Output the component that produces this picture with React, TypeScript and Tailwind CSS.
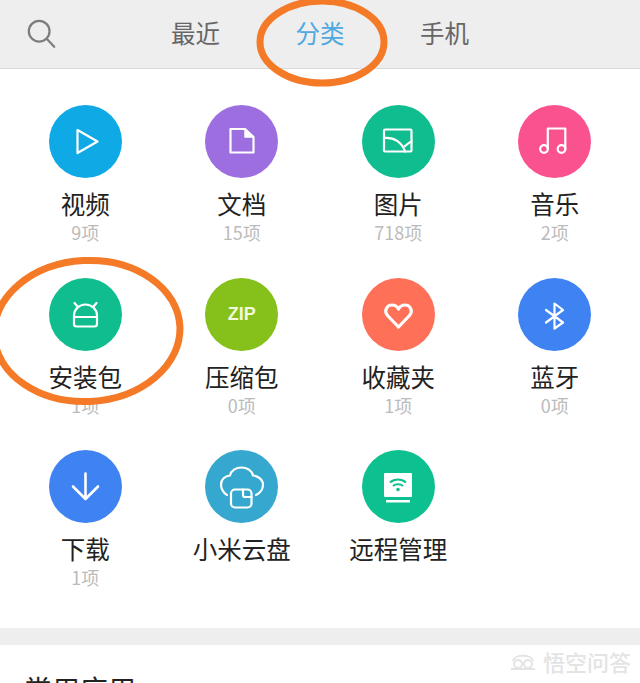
import React from "react";

const sw = { fill: "none", stroke: "white", strokeWidth: 2.2, strokeLinejoin: "round" as const, strokeLinecap: "round" as const };

const icons: Record<string, React.ReactNode> = {
  play: <path d="M28.5 25 L48.5 36.5 L28.5 48 Z" {...sw} />,
  doc: (
    <>
      <path d="M25.5 24 H40 L48.5 32 V47.5 H25.5 Z" {...sw} />
      <path d="M40 24 V32 H48.5 Z" fill="white" stroke="white" strokeWidth={1.5} strokeLinejoin="round" />
    </>
  ),
  image: (
    <>
      <rect x="22" y="24.5" width="27.5" height="22" rx="1" {...sw} />
      <path d="M22 33 C32 32 40 37 43 46.5 M43 41 C45 39.5 47 37.5 49.5 36.5" {...sw} />
    </>
  ),
  music: (
    <>
      <circle cx="26" cy="44" r="3.8" {...sw} />
      <circle cx="43.5" cy="44" r="3.8" {...sw} />
      <path d="M29.8 44 V23.5 H47.3 V44" {...sw} />
    </>
  ),
  android: (
    <path d="M25 37.5 a11.500 11 0 0 1 23 0 V46 a2.5 2.5 0 0 1 -2.5 2.500 H27.500 a2.5 2.5 0 0 1 -2.5 -2.500 Z M25 39 H48 M28.500 28.500 L25.500 25 M44.500 28.500 L47.500 25" {...sw} />
  ),
  zip: null,
  heart: <path d="M36.5 49 L25.5 37.5 C21.5 32.5 25 27 30 27 C33 27 35.500 29 36.500 31 C37.500 29 40 27 43 27 C48 27 51.500 32.500 47.500 37.500 Z" fill="none" stroke="white" strokeWidth={3.2} strokeLinejoin="round" />,
  bluetooth: <path d="M28 32 L45 44.500 L36.500 50.500 V25.500 L45 32 L28 44.500" {...sw} />,
  download: <path d="M36.500 23.500 V48.500 M24 36.500 L36.500 49 L49 36.500" {...sw} strokeWidth={2.6} />,
  cloud: (
    <>
      <path d="M22 45 C18 43 16 38 16 34.500 C16 29.500 20 26 25 25.500 C26 20.500 31 17.500 36.500 17.500 C42 17.500 47 20.500 48 25.500 C53 26 58 29.500 58 34.500 C58 38 56 43 51 45" {...sw} />
      <rect x="26" y="39.500" width="20.500" height="18" rx="4" {...sw} />
      <path d="M38 39.500 V45 a2 2 0 0 0 2 2 H46.500" {...sw} />
    </>
  ),
  remote: (
    <>
      <rect x="22" y="23" width="28" height="24" rx="1" fill="white" />
      <rect x="24" y="50" width="24" height="2.500" fill="white" />
      <path d="M28 32.500 C32.500 28.500 39.500 28.500 44 32.500 M31 36 C33.500 33.800 38.500 33.800 41 36" fill="none" stroke="#0cc08f" strokeWidth={2} />
      <circle cx="36" cy="39.500" r="1.800" fill="#0cc08f" />
    </>
  ),
};

const items = [
  { name: "视频", count: "9项", bg: "bg-[#0fa9e6]", icon: "play" },
  { name: "文档", count: "15项", bg: "bg-[#9d6ee0]", icon: "doc" },
  { name: "图片", count: "718项", bg: "bg-[#10bd8f]", icon: "image" },
  { name: "音乐", count: "2项", bg: "bg-[#f9528f]", icon: "music" },
  { name: "安装包", count: "1项", bg: "bg-[#10bd8f]", icon: "android" },
  { name: "压缩包", count: "0项", bg: "bg-[#86c01a]", icon: "zip" },
  { name: "收藏夹", count: "1项", bg: "bg-[#ff7059]", icon: "heart" },
  { name: "蓝牙", count: "0项", bg: "bg-[#3f83f3]", icon: "bluetooth" },
  { name: "下载", count: "1项", bg: "bg-[#3f83f3]", icon: "download" },
  { name: "小米云盘", count: "", bg: "bg-[#36a8d0]", icon: "cloud" },
  { name: "远程管理", count: "", bg: "bg-[#0cc08f]", icon: "remote" },
];

export default function App() {
  return (
    <div className="relative w-[640px] h-[683px] overflow-hidden bg-white font-['Noto_Sans_CJK_SC',sans-serif]">
      <header className="flex items-center h-[69px] bg-[#eeeeee] border-b border-[#d9d9d9]">
        <svg width="32" height="32" viewBox="0 0 34 34" className="ml-[26px]" fill="none" stroke="#7d7d7d" strokeWidth="2.400" strokeLinecap="round">
          <circle cx="14" cy="14" r="11" />
          <path d="M22 22 L30 30.500" />
        </svg>
        <nav className="flex gap-[75.500px] ml-[113px] mb-[2px] text-[24.500px] leading-[32px] text-[#666666]">
          <span>最近</span>
          <span className="text-[#4fa9e0]">分类</span>
          <span>手机</span>
        </nav>
      </header>

      <main className="grid grid-cols-[repeat(4,156.500px)] auto-rows-[172.500px] pl-[7px] pt-[36px] pb-[5.500px]">
        {items.map((it) => (
          <div key={it.name} className="flex flex-col items-center">
            <div className={`flex items-center justify-center w-[73px] h-[73px] rounded-full ${it.bg}`}>
              {it.icon === "zip" ? (
                <span className="font-['Liberation_Sans',sans-serif] font-bold text-[18px] leading-none text-[#f2f8dc]">ZIP</span>
              ) : (
                <svg width="73" height="73" viewBox="0 0 73 73">{icons[it.icon]}</svg>
              )}
            </div>
            <div className="mt-[10px] text-[24.500px] leading-[32px] text-[#222222] whitespace-nowrap">{it.name}</div>
            {it.count && <div className="text-[18px] leading-[24px] text-[#bbbbbb] whitespace-nowrap">{it.count}</div>}
          </div>
        ))}
      </main>

      <div className="h-[17px] bg-[#eeeeee]" />
      <h2 className="pl-[24px] pt-[26px] text-[28px] leading-[36px] font-normal text-[#222222]">常用应用</h2>

      <div className="absolute left-[510px] top-[646px] flex items-center gap-[7px] text-[#e4e4e4]">
        <svg width="26" height="22" viewBox="0 0 26 22" fill="none" stroke="#e4e4e4" strokeWidth="2">
          <path d="M3 11 C4 4 22 4 23 11" />
          <circle cx="8" cy="14" r="4" />
          <circle cx="18" cy="14" r="4" />
          <path d="M1 19 H25" />
        </svg>
        <span className="text-[22px] leading-[30px] font-medium">悟空问答</span>
      </div>

      <svg className="absolute inset-0" width="640" height="683" viewBox="0 0 640 683" fill="none" stroke="#f47a28" strokeWidth="7">
        <ellipse cx="322" cy="42" rx="62" ry="41" />
        <ellipse cx="87" cy="331" rx="93" ry="70.500" transform="rotate(-3 87 331)" />
      </svg>
    </div>
  );
}
